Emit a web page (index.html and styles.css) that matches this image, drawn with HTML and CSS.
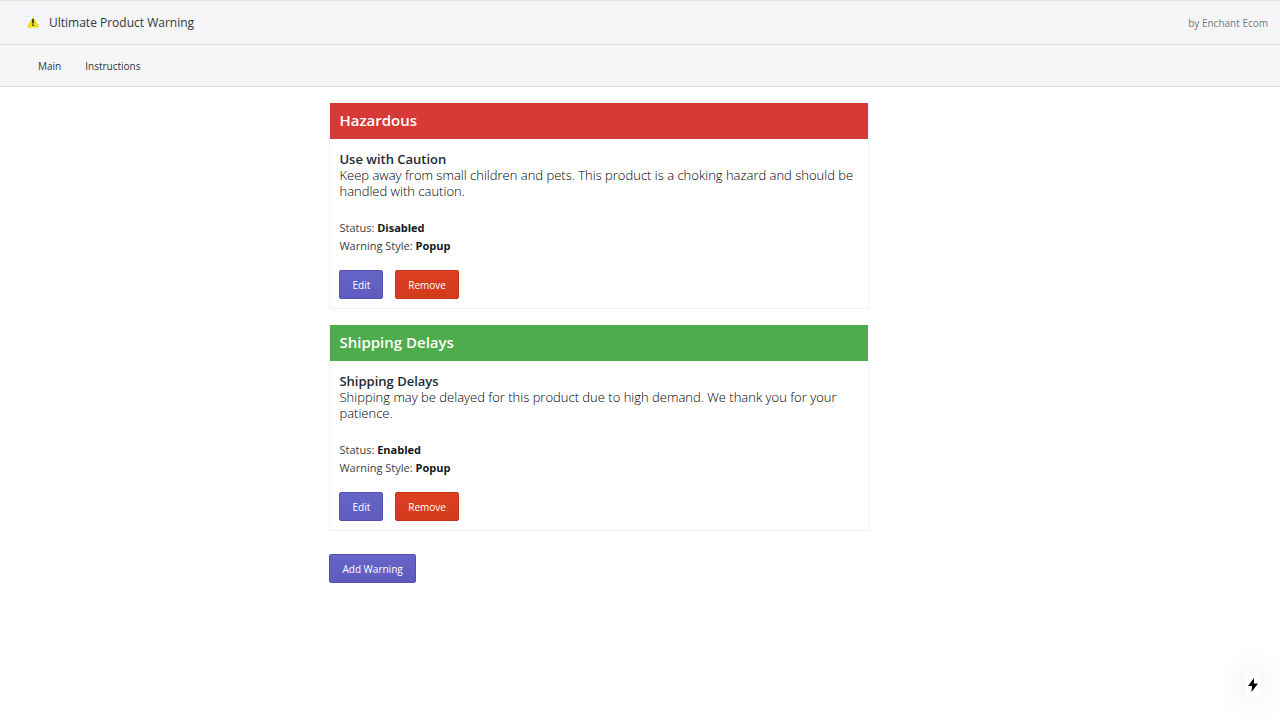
FILE: index.html
```html
<!DOCTYPE html>
<html lang="en">
<head>
  <meta charset="UTF-8" />
  <meta name="viewport" content="width=device-width, initial-scale=1.0" />
  <title>Ultimate Product Warning</title>
  <link rel="stylesheet" href="styles.css">
</head>
<body>
  <header class="topbar">
    <div class="brand">
      <svg class="brand-icon" viewBox="0 0 18 18" aria-hidden="true">
        <rect width="18" height="18" fill="#f1f8fb" />
        <path d="M0 2.5H18M0 6.5H18M0 10.500H18M0 14.500H18" stroke="#d9ebf4" stroke-dasharray="2 2" />
        <path d="M8 3.500L13.500 13H2.500Z" fill="#f2dd0a" stroke="#ecd90f" stroke-linejoin="round" />
        <path d="M8 5V9.500M8 10.500V12" stroke="#4a450a" stroke-width="2" />
      </svg>
      <span>Ultimate Product Warning</span>
    </div>
    <span class="author">by Enchant Ecom</span>
  </header>
  <nav class="menu">
    <a href="#main">Main</a>
    <a href="#instructions">Instructions</a>
  </nav>

  <main class="page" id="main">
    <div class="warnings">
      <section class="card">
        <h2 class="card-header red">Hazardous</h2>
        <div class="card-body">
          <h3>Use with Caution</h3>
          <p class="message">Keep away from small children and pets. This product is a choking hazard and should be handled with caution.</p>
          <p class="detail">Status: <b>Disabled</b></p>
          <p class="detail">Warning Style: <b>Popup</b></p>
          <div class="actions">
            <button type="button" class="btn">Edit</button>
            <button type="button" class="btn btn-remove">Remove</button>
          </div>
        </div>
      </section>

      <section class="card">
        <h2 class="card-header green">Shipping Delays</h2>
        <div class="card-body">
          <h3>Shipping Delays</h3>
          <p class="message">Shipping may be delayed for this product due to high demand. We thank you for your patience.</p>
          <p class="detail">Status: <b>Enabled</b></p>
          <p class="detail">Warning Style: <b>Popup</b></p>
          <div class="actions">
            <button type="button" class="btn">Edit</button>
            <button type="button" class="btn btn-remove">Remove</button>
          </div>
        </div>
      </section>

      <button type="button" class="btn btn-add">Add Warning</button>
    </div>
  </main>

  <!-- Floating shortcut button -->
  <button type="button" class="quick" aria-label="Quick actions">
    <svg viewBox="0 0 10 14" aria-hidden="true">
      <path d="M6 0L0 8H4L3.500 14L10 5.500H6Z" fill="#000" />
    </svg>
  </button>
</body>
</html>
```
FILE: styles.css
```css
* {
  box-sizing: border-box;
}
body {
  margin: 0;
  background: #fff;
  color: #212b36;
  font-family: "Open Sans", "Noto Sans", sans-serif;
  font-size: 13px;
}
h2, h3, p {
  margin: 0;
}

/* Top bars */
.topbar {
  display: flex;
  align-items: center;
  justify-content: space-between;
  height: 45px;
  padding: 0 12px 0 25px;
  background: #f5f5f7;
  border-top: 1px solid #e2e2e5;
  border-bottom: 1px solid #dcdee1;
  font-size: 12px;
}
.brand {
  display: flex;
  align-items: center;
  gap: 6px;
  color: #32373c;
}
.brand-icon {
  width: 18px;
  height: 18px;
}
.author {
  color: #75797e;
  font-size: 10px;
}
.menu {
  display: flex;
  align-items: center;
  gap: 24px;
  height: 42px;
  padding: 0 38px;
  background: #f5f5f7;
  border-bottom: 1px solid #dcdee1;
}
.menu a {
  color: #32373c;
  font-size: 10px;
  text-decoration: none;
}

/* Warning cards */
.page {
  padding: 16px 82px 16px 0;
}
.warnings {
  width: 45%;
  margin: 0 auto;
}
.card {
  margin-bottom: 16px;
  border: 1px solid #f2f2f3;
  border-top: none;
}
.card-header {
  padding: 6px 9px 8px;
  color: #fff;
  font-size: 15px;
  font-weight: 600;
  line-height: 22px;
}
.red {
  background: #d73a36;
}
.green {
  background: #4eac4d;
}
.card-body {
  padding: 12px 0 9px 9px;
}
.card-body h3 {
  font-size: 13px;
  font-weight: 600;
  line-height: 16px;
}
.message {
  margin-bottom: 20px;
  color: #000;
  font-weight: 300;
  line-height: 16px;
}
.detail {
  color: #3a3f45;
  font-size: 11px;
  line-height: 18px;
}
.detail b {
  color: #14181c;
}
.actions {
  display: flex;
  gap: 12px;
  margin-top: 15px;
}

/* Buttons */
.btn {
  height: 29px;
  padding: 0 12px;
  border: 1px solid #5450b4;
  border-radius: 2px;
  background: linear-gradient(#6665c6, #5f5bc0);
  color: #fff;
  font-family: inherit;
  font-size: 10px;
  cursor: pointer;
}
.btn-remove {
  border-color: #c4331a;
  background: linear-gradient(#de3f21, #d23a1c);
}
.btn-add {
  margin-top: 7px;
}
.quick {
  position: fixed;
  right: 20px;
  bottom: 23px;
  display: flex;
  align-items: center;
  justify-content: center;
  width: 15px;
  height: 24px;
  padding: 0;
  border: none;
  border-radius: 2px;
  background: #fff;
  box-shadow: 0 0 32px rgba(0, 0, 0, 0.15);
  cursor: pointer;
}
.quick svg {
  width: 10px;
  height: 14px;
}
```
